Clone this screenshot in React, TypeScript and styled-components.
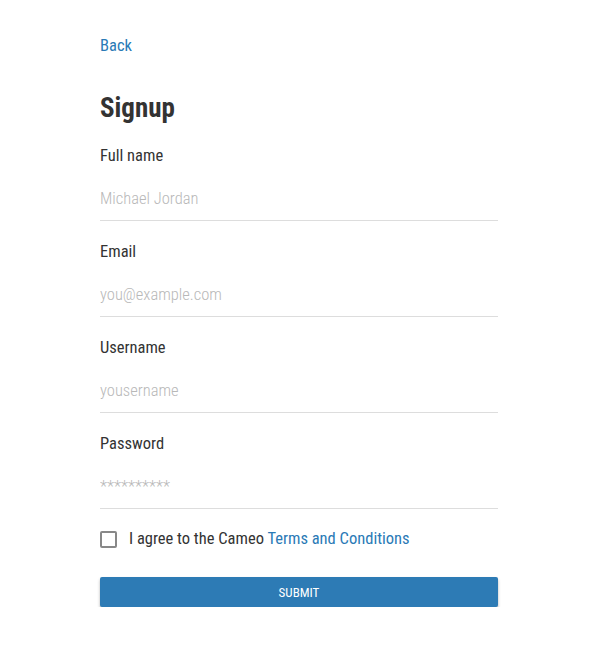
import React from 'react';
import styled, { createGlobalStyle } from 'styled-components';

const Global = createGlobalStyle`
  body {
    margin: 0;
    background: #fff;
    font-family: "Roboto Condensed", "Open Sans", sans-serif;
    color: #333;
  }
`;

const Page = styled.div`
  width: 398px;
  margin: 0 auto;
  padding-top: 36px;
`;

const BackLink = styled.a`
  display: block;
  color: #2a7ab6;
  font-size: 16.5px;
  line-height: 20px;
  text-decoration: none;
`;

const Title = styled.h1`
  margin: 35px 0 0;
  font-size: 27px;
  line-height: 34px;
  font-weight: 700;
  color: #333;
`;

const Field = styled.label`
  display: block;
  padding-top: 21px;
`;

const FieldLabel = styled.span`
  display: block;
  font-size: 16.5px;
  line-height: 20px;
  color: #333;
`;

const Input = styled.input`
  display: block;
  width: 100%;
  box-sizing: border-box;
  margin-top: 11px;
  height: 44px;
  border: none;
  border-bottom: 1px solid #ddd;
  padding: 0;
  font-family: inherit;
  font-size: 16.5px;
  font-weight: 300;
  color: #333;
  outline: none;
  &::placeholder {
    color: #b8b8b8;
  }
`;

const AgreeRow = styled.label`
  display: flex;
  align-items: center;
  gap: 12px;
  margin-top: 20px;
  font-size: 16.5px;
  line-height: 20px;
  color: #333;
`;

const Box = styled.span`
  width: 13px;
  height: 13px;
  border: 2px solid #888;
  border-radius: 2px;
  flex: none;
`;

const Link = styled.a`
  color: #2a7ab6;
  text-decoration: none;
`;

const Submit = styled.button`
  display: block;
  width: 100%;
  height: 30px;
  margin-top: 28px;
  border: none;
  border-radius: 2px;
  background: #2d7bb5;
  color: #fff;
  font-family: inherit;
  font-size: 13px;
  text-transform: uppercase;
  box-shadow: 0 2px 3px rgba(0, 0, 0, 0.3);
`;

const fields = [
  { label: 'Full name', placeholder: 'Michael Jordan', type: 'text' },
  { label: 'Email', placeholder: 'you@example.com', type: 'email' },
  { label: 'Username', placeholder: 'yousername', type: 'text' },
  { label: 'Password', placeholder: '**********', type: 'text' },
];

export default function App() {
  return (
    <>
      <Global />
      <Page>
        <BackLink href="#">Back</BackLink>
        <Title>Signup</Title>
        {fields.map(f => (
          <Field key={f.label}>
            <FieldLabel>{f.label}</FieldLabel>
            <Input type={f.type} placeholder={f.placeholder} />
          </Field>
        ))}
        <AgreeRow>
          <Box />
          <span>
            I agree to the Cameo <Link href="#">Terms and Conditions</Link>
          </span>
        </AgreeRow>
        <Submit type="button">Submit</Submit>
      </Page>
    </>
  );
}
